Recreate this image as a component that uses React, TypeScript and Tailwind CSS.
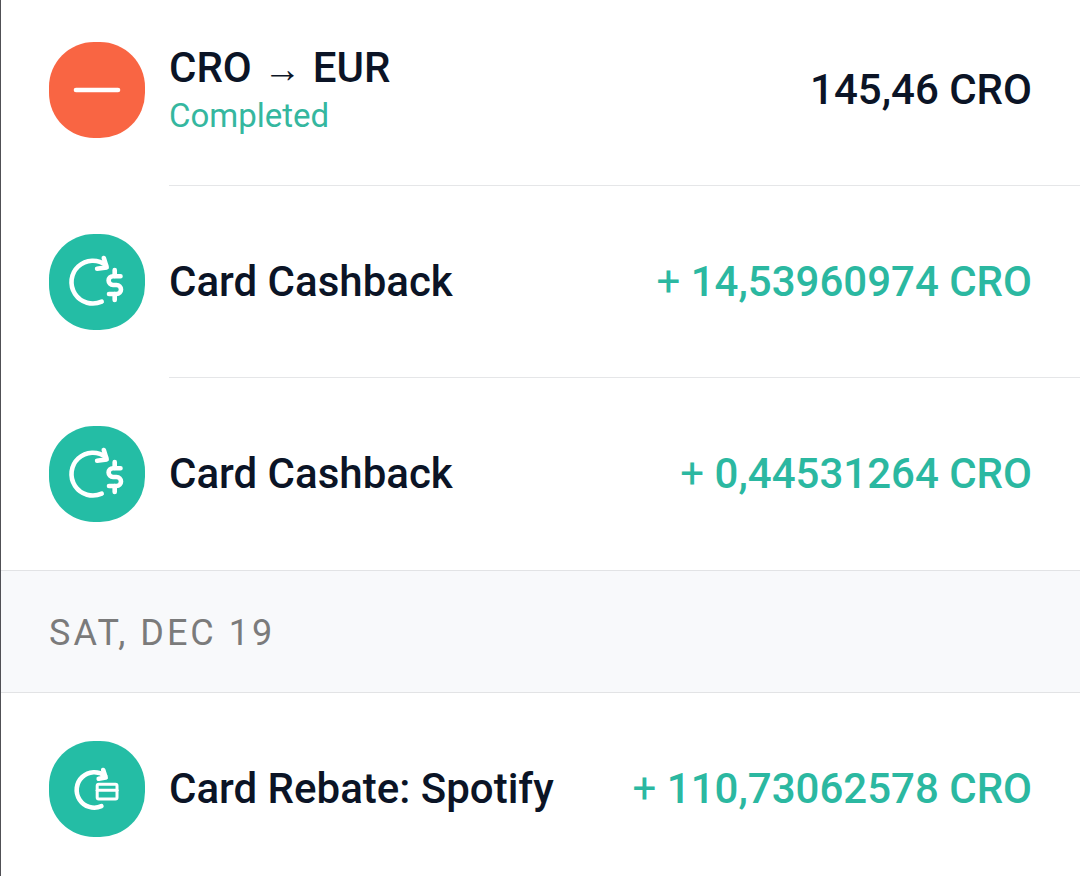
import clsx from "clsx";
import type { ReactNode } from "react";

type IconName = "exchange" | "cashback" | "rebate";

type Transaction = {
	id: number;
	icon: IconName;
	title: ReactNode;
	status?: string;
	amount: string;
	incoming?: boolean;
};

type Group = {
	date?: string;
	transactions: Transaction[];
};

const groups: Group[] = [
	{
		transactions: [
			{
				id: 1,
				icon: "exchange",
				title: (
					<>
						CRO{" "}
						<span className="mx-px font-['Liberation_Sans',sans-serif] text-[38px] leading-none font-normal">
							→
						</span>{" "}
						EUR
					</>
				),
				status: "Completed",
				amount: "145,46 CRO",
			},
			{
				id: 2,
				icon: "cashback",
				title: "Card Cashback",
				amount: "14,53960974 CRO",
				incoming: true,
			},
			{
				id: 3,
				icon: "cashback",
				title: "Card Cashback",
				amount: "0,44531264 CRO",
				incoming: true,
			},
		],
	},
	{
		date: "SAT, DEC 19",
		transactions: [
			{
				id: 4,
				icon: "rebate",
				title: "Card Rebate: Spotify",
				amount: "110,73062578 CRO",
				incoming: true,
			},
		],
	},
];

const glyphs: Record<IconName, ReactNode> = {
	exchange: <path d="M27 48h42" />,
	cashback: (
		<>
			<path d="M52.7 67.6A21.4 21.4 0 1 1 57 31.2" />
			<path d="M54.8 24l2.9 9.4-9.6 1.3" />
			<path d="M71.5 42.2H64a4.4 4.4 0 0 0 0 8.8h3.5a4.5 4.5 0 0 1 0 9H60" />
			<path d="M65.7 36v6M65.7 60v6" />
		</>
	),
	rebate: (
		<>
			<path d="M52.4 65.2A17.7 17.7 0 1 1 56 34.8" />
			<path d="M54.2 29l2.5 7.6-7 1.2" />
			<rect x="48.2" y="43.3" width="19.8" height="14.8" rx="1.5" strokeWidth="3" />
			<path d="M48.2 49.3h19.8" strokeWidth="3" />
		</>
	),
};

const TransactionIcon = ({ name }: { name: IconName }) => (
	<svg
		viewBox="0 0 96 96"
		aria-hidden="true"
		className={clsx(
			"size-24 shrink-0",
			name === "exchange" ? "text-[#f96543]" : "text-[#24bda5]",
		)}
	>
		<rect width="96" height="96" rx="45" fill="currentColor" />
		<g
			fill="none"
			stroke="#fff"
			strokeWidth="4.6"
			strokeLinecap="round"
			strokeLinejoin="round"
		>
			{glyphs[name]}
		</g>
	</svg>
);

const TransactionRow = ({ transaction }: { transaction: Transaction }) => {
	const { icon, title, status, amount, incoming } = transaction;
	return (
		<li className="group flex gap-6 pl-12">
			<div className="py-12">
				<TransactionIcon name={icon} />
			</div>
			<div className="flex flex-1 items-center justify-between gap-6 border-b border-[#e5e6e8] pr-12 group-last:border-b-0">
				<div className={clsx(status && "pt-1")}>
					<p className="text-[42px] leading-12 font-medium">{title}</p>
					{status && (
						<p className="text-[33px] leading-12 text-[#35b79f]">{status}</p>
					)}
				</div>
				<p
					className={clsx(
						"text-right text-[42px] leading-12 font-medium whitespace-nowrap",
						incoming && "text-[#2bb8a1]",
					)}
				>
					{incoming && <span className="font-normal">+ </span>}
					{amount}
				</p>
			</div>
		</li>
	);
};

const App = () => {
	return (
		<main className="h-screen overflow-hidden border-l border-[#505055] bg-white font-[Roboto,sans-serif] text-[#0b1426]">
			<div className="-mt-1.5">
				{groups.map((group, index) => (
					<section key={index}>
						{group.date && (
							<h2 className="border-y border-[#e2e3e5] bg-[#f8f9fb] px-12 pt-[38px] pb-[35px] text-4xl leading-12 tracking-[3px] text-[#7b7b7b]">
								{group.date}
							</h2>
						)}
						<ul>
							{group.transactions.map((transaction) => (
								<TransactionRow key={transaction.id} transaction={transaction} />
							))}
						</ul>
					</section>
				))}
			</div>
		</main>
	);
};

export default App;
